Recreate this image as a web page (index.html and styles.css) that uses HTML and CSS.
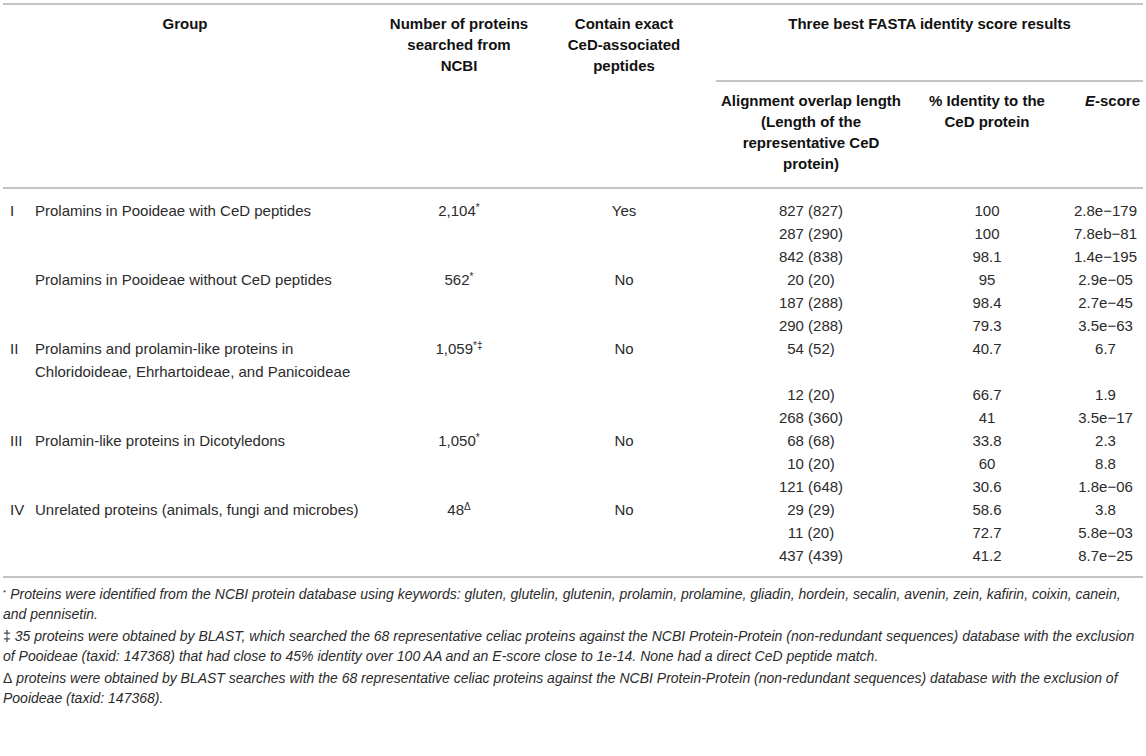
FILE: index.html
```html
<!DOCTYPE html>
<html>
<head>
<meta charset="utf-8">
<link rel="stylesheet" href="styles.css">
</head>
<body>
<div class="page">
  <table class="data">
    <colgroup>
      <col class="c1"><col class="c2"><col class="c3"><col class="c4"><col class="c5"><col class="c6"><col class="c7">
    </colgroup>
    <thead>
      <tr class="h1">
        <th colspan="2">Group</th>
        <th>Number of proteins<br>searched from<br>NCBI</th>
        <th class="contain">Contain exact<br>CeD-associated<br>peptides</th>
        <th colspan="3" class="three">Three best FASTA identity score results</th>
      </tr>
      <tr class="h2">
        <th colspan="4"></th>
        <th>Alignment overlap length<br>(Length of the<br>representative CeD<br>protein)</th>
        <th>% Identity to the<br>CeD protein</th>
        <th class="escore"><i>E</i>-score</th>
      </tr>
    </thead>
    <tbody>
      <tr class="first">
        <td class="num">I</td><td class="grp">Prolamins in Pooideae with CeD peptides</td>
        <td class="ctr">2,104<sup>*</sup></td><td class="ctr contain">Yes</td>
        <td class="ctr">827 (827)</td><td class="ctr">100</td><td class="ctr">2.8e−179</td>
      </tr>
      <tr>
        <td></td><td></td><td></td><td></td>
        <td class="ctr">287 (290)</td><td class="ctr">100</td><td class="ctr">7.8eb−81</td>
      </tr>
      <tr>
        <td></td><td></td><td></td><td></td>
        <td class="ctr">842 (838)</td><td class="ctr">98.1</td><td class="ctr">1.4e−195</td>
      </tr>
      <tr>
        <td></td><td class="grp">Prolamins in Pooideae without CeD peptides</td>
        <td class="ctr">562<sup>*</sup></td><td class="ctr contain">No</td>
        <td class="ctr">20 (20)</td><td class="ctr">95</td><td class="ctr">2.9e−05</td>
      </tr>
      <tr>
        <td></td><td></td><td></td><td></td>
        <td class="ctr">187 (288)</td><td class="ctr">98.4</td><td class="ctr">2.7e−45</td>
      </tr>
      <tr>
        <td></td><td></td><td></td><td></td>
        <td class="ctr">290 (288)</td><td class="ctr">79.3</td><td class="ctr">3.5e−63</td>
      </tr>
      <tr>
        <td class="num">II</td><td class="grp">Prolamins and prolamin-like proteins in Chloridoideae, Ehrhartoideae, and Panicoideae</td>
        <td class="ctr">1,059<sup>*‡</sup></td><td class="ctr contain">No</td>
        <td class="ctr">54 (52)</td><td class="ctr">40.7</td><td class="ctr">6.7</td>
      </tr>
      <tr>
        <td></td><td></td><td></td><td></td>
        <td class="ctr">12 (20)</td><td class="ctr">66.7</td><td class="ctr">1.9</td>
      </tr>
      <tr>
        <td></td><td></td><td></td><td></td>
        <td class="ctr">268 (360)</td><td class="ctr">41</td><td class="ctr">3.5e−17</td>
      </tr>
      <tr>
        <td class="num">III</td><td class="grp">Prolamin-like proteins in Dicotyledons</td>
        <td class="ctr">1,050<sup>*</sup></td><td class="ctr contain">No</td>
        <td class="ctr">68 (68)</td><td class="ctr">33.8</td><td class="ctr">2.3</td>
      </tr>
      <tr>
        <td></td><td></td><td></td><td></td>
        <td class="ctr">10 (20)</td><td class="ctr">60</td><td class="ctr">8.8</td>
      </tr>
      <tr>
        <td></td><td></td><td></td><td></td>
        <td class="ctr">121 (648)</td><td class="ctr">30.6</td><td class="ctr">1.8e−06</td>
      </tr>
      <tr>
        <td class="num">IV</td><td class="grp">Unrelated proteins (animals, fungi and microbes)</td>
        <td class="ctr">48<sup>Δ</sup></td><td class="ctr contain">No</td>
        <td class="ctr">29 (29)</td><td class="ctr">58.6</td><td class="ctr">3.8</td>
      </tr>
      <tr>
        <td></td><td></td><td></td><td></td>
        <td class="ctr">11 (20)</td><td class="ctr">72.7</td><td class="ctr">5.8e−03</td>
      </tr>
      <tr class="last">
        <td></td><td></td><td></td><td></td>
        <td class="ctr">437 (439)</td><td class="ctr">41.2</td><td class="ctr">8.7e−25</td>
      </tr>
    </tbody>
  </table>
  <div class="notes">
    <p><sup class="mark">*</sup>Proteins were identified from the NCBI protein database using keywords: gluten, glutelin, glutenin, prolamin, prolamine, gliadin, hordein, secalin, avenin, zein, kafirin, coixin, canein, and pennisetin.</p>
    <p><span class="mark">‡</span>35 proteins were obtained by BLAST, which searched the 68 representative celiac proteins against the NCBI Protein-Protein (non-redundant sequences) database with the exclusion of Pooideae (taxid: 147368) that had close to 45% identity over 100 AA and an E-score close to 1e-14. None had a direct CeD peptide match.</p>
    <p><span class="mark">Δ</span>proteins were obtained by BLAST searches with the 68 representative celiac proteins against the NCBI Protein-Protein (non-redundant sequences) database with the exclusion of Pooideae (taxid: 147368).</p>
  </div>
</div>
</body>
</html>
```

FILE: styles.css
```css
html, body {
  margin: 0;
  padding: 0;
  background: #ffffff;
}

body {
  font-family: "Liberation Sans", Arial, sans-serif;
  color: #2b2b2b;
}

.page {
  padding: 3px 3px 0 3px;
  width: 1140px;
}

.data {
  width: 1140px;
  table-layout: fixed;
  border-collapse: separate;
  border-spacing: 0;
  border-top: 2px solid #c4c4c4;
  border-bottom: 2px solid #c4c4c4;
  font-size: 15px;
}

.c1 { width: 25px; }
.c2 { width: 339px; }
.c3 { width: 184px; }
.c4 { width: 165px; }
.c5 { width: 190px; }
.c6 { width: 162px; }
.c7 { width: 75px; }

th {
  font-weight: bold;
  color: #111;
  text-align: center;
  vertical-align: top;
  line-height: 21px;
  padding: 0;
  white-space: nowrap;
}

.h1 th {
  padding-top: 8px;
  padding-bottom: 6px;
}

.h1 th.three {
  border-bottom: 2px solid #c4c4c4;
}

.h2 th {
  padding-top: 8px;
  padding-bottom: 13px;
  border-bottom: 2px solid #c4c4c4;
}

th.contain,
td.contain {
  padding-right: 19px;
}

.h2 th.escore {
  padding-left: 14px;
}

td {
  line-height: 23px;
  padding: 0;
  vertical-align: top;
  white-space: nowrap;
}

td.num {
  padding-left: 7px;
}

td.grp {
  padding-left: 7px;
  white-space: normal;
}

td.ctr {
  text-align: center;
}

tr.first td {
  padding-top: 10px;
}

tr.last td {
  padding-bottom: 9px;
}

sup {
  font-size: 10px;
  line-height: 0;
  vertical-align: 5px;
}

.notes {
  padding-top: 6px;
  font-size: 14px;
  font-style: italic;
  line-height: 20px;
  color: #2b2b2b;
}

.notes p {
  margin: 0 0 2px 0;
}

.notes sup {
  font-size: 8px;
  vertical-align: 4px;
}

.notes .mark {
  font-style: normal;
  display: inline-block;
  margin-right: 4px;
}
```
